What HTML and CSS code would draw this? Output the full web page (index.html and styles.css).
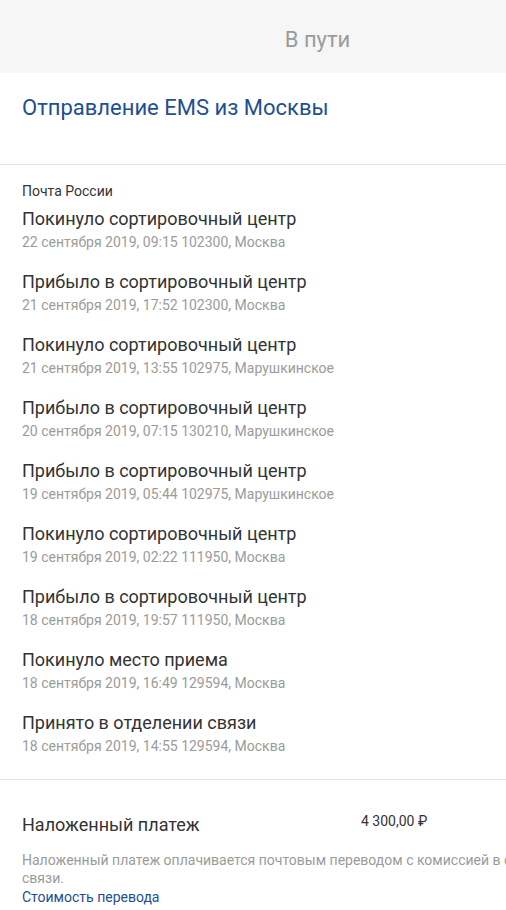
FILE: index.html
```html
<!DOCTYPE html>
<html lang="ru">
<head>
<meta charset="utf-8">
<link rel="stylesheet" href="styles.css">
</head>
<body>
<div class="page">
  <header class="status">В пути</header>
  <section class="head">
    <h1 class="title">Отправление EMS из Москвы</h1>
  </section>
  <section class="history">
    <div class="carrier">Почта России</div>
    <div class="event"><div class="ev-title">Покинуло сортировочный центр</div><div class="ev-meta">22 сентября 2019, 09:15 102300, Москва</div></div>
    <div class="event"><div class="ev-title">Прибыло в сортировочный центр</div><div class="ev-meta">21 сентября 2019, 17:52 102300, Москва</div></div>
    <div class="event"><div class="ev-title">Покинуло сортировочный центр</div><div class="ev-meta">21 сентября 2019, 13:55 102975, Марушкинское</div></div>
    <div class="event"><div class="ev-title">Прибыло в сортировочный центр</div><div class="ev-meta">20 сентября 2019, 07:15 130210, Марушкинское</div></div>
    <div class="event"><div class="ev-title">Прибыло в сортировочный центр</div><div class="ev-meta">19 сентября 2019, 05:44 102975, Марушкинское</div></div>
    <div class="event"><div class="ev-title">Покинуло сортировочный центр</div><div class="ev-meta">19 сентября 2019, 02:22 111950, Москва</div></div>
    <div class="event"><div class="ev-title">Прибыло в сортировочный центр</div><div class="ev-meta">18 сентября 2019, 19:57 111950, Москва</div></div>
    <div class="event"><div class="ev-title">Покинуло место приема</div><div class="ev-meta">18 сентября 2019, 16:49 129594, Москва</div></div>
    <div class="event"><div class="ev-title">Принято в отделении связи</div><div class="ev-meta">18 сентября 2019, 14:55 129594, Москва</div></div>
  </section>
  <section class="payment">
    <div class="pay-row">
      <div class="pay-label">Наложенный платеж</div>
      <div class="pay-amount">4 300,00 ₽</div>
    </div>
    <p class="pay-note">Наложенный платеж оплачивается почтовым переводом с комиссией в отделении связи.</p>
    <a class="pay-link" href="#">Стоимость перевода</a>
  </section>
</div>
</body>
</html>
```
FILE: styles.css
```css
html, body {
  margin: 0;
  padding: 0;
  overflow: hidden;
  background: #fff;
}
body {
  font-family: Roboto, "Noto Sans", Arial, sans-serif;
  color: #333;
}
.page {
  width: 635px;
}
.status {
  height: 73px;
  background: #f6f6f6;
  display: flex;
  align-items: center;
  justify-content: center;
  padding-top: 6px;
  box-sizing: border-box;
  font-size: 22px;
  color: #9b9b9b;
}
.head {
  padding: 21px 22px 42px;
  border-bottom: 1px solid #e5e5e5;
}
.title {
  margin: 0;
  font-size: 22px;
  font-weight: 400;
  line-height: 28px;
  color: #1c4f93;
}
.history {
  padding: 18px 22px 5px;
  border-bottom: 1px solid #e5e5e5;
}
.carrier {
  font-size: 14px;
  line-height: 16px;
  margin-bottom: 8px;
  color: #333;
}
.event {
  margin-bottom: 18px;
}
.ev-title {
  font-size: 18px;
  line-height: 24px;
  color: #333;
}
.ev-meta {
  margin-top: 1px;
  font-size: 14px;
  line-height: 20px;
  color: #9b9b9b;
}
.payment {
  padding: 33px 22px 0;
}
.pay-row {
  display: grid;
  grid-template-columns: 339px auto;
  align-items: start;
}
.pay-label {
  font-size: 18px;
  line-height: 24px;
  color: #333;
}
.pay-amount {
  font-size: 14px;
  line-height: 16px;
  color: #333;
}
.pay-note {
  margin: 14px 0 0;
  font-size: 14px;
  line-height: 18px;
  color: #9b9b9b;
}
.pay-link {
  display: block;
  font-size: 14px;
  line-height: 20px;
  color: #1c4f93;
  text-decoration: none;
}
```
